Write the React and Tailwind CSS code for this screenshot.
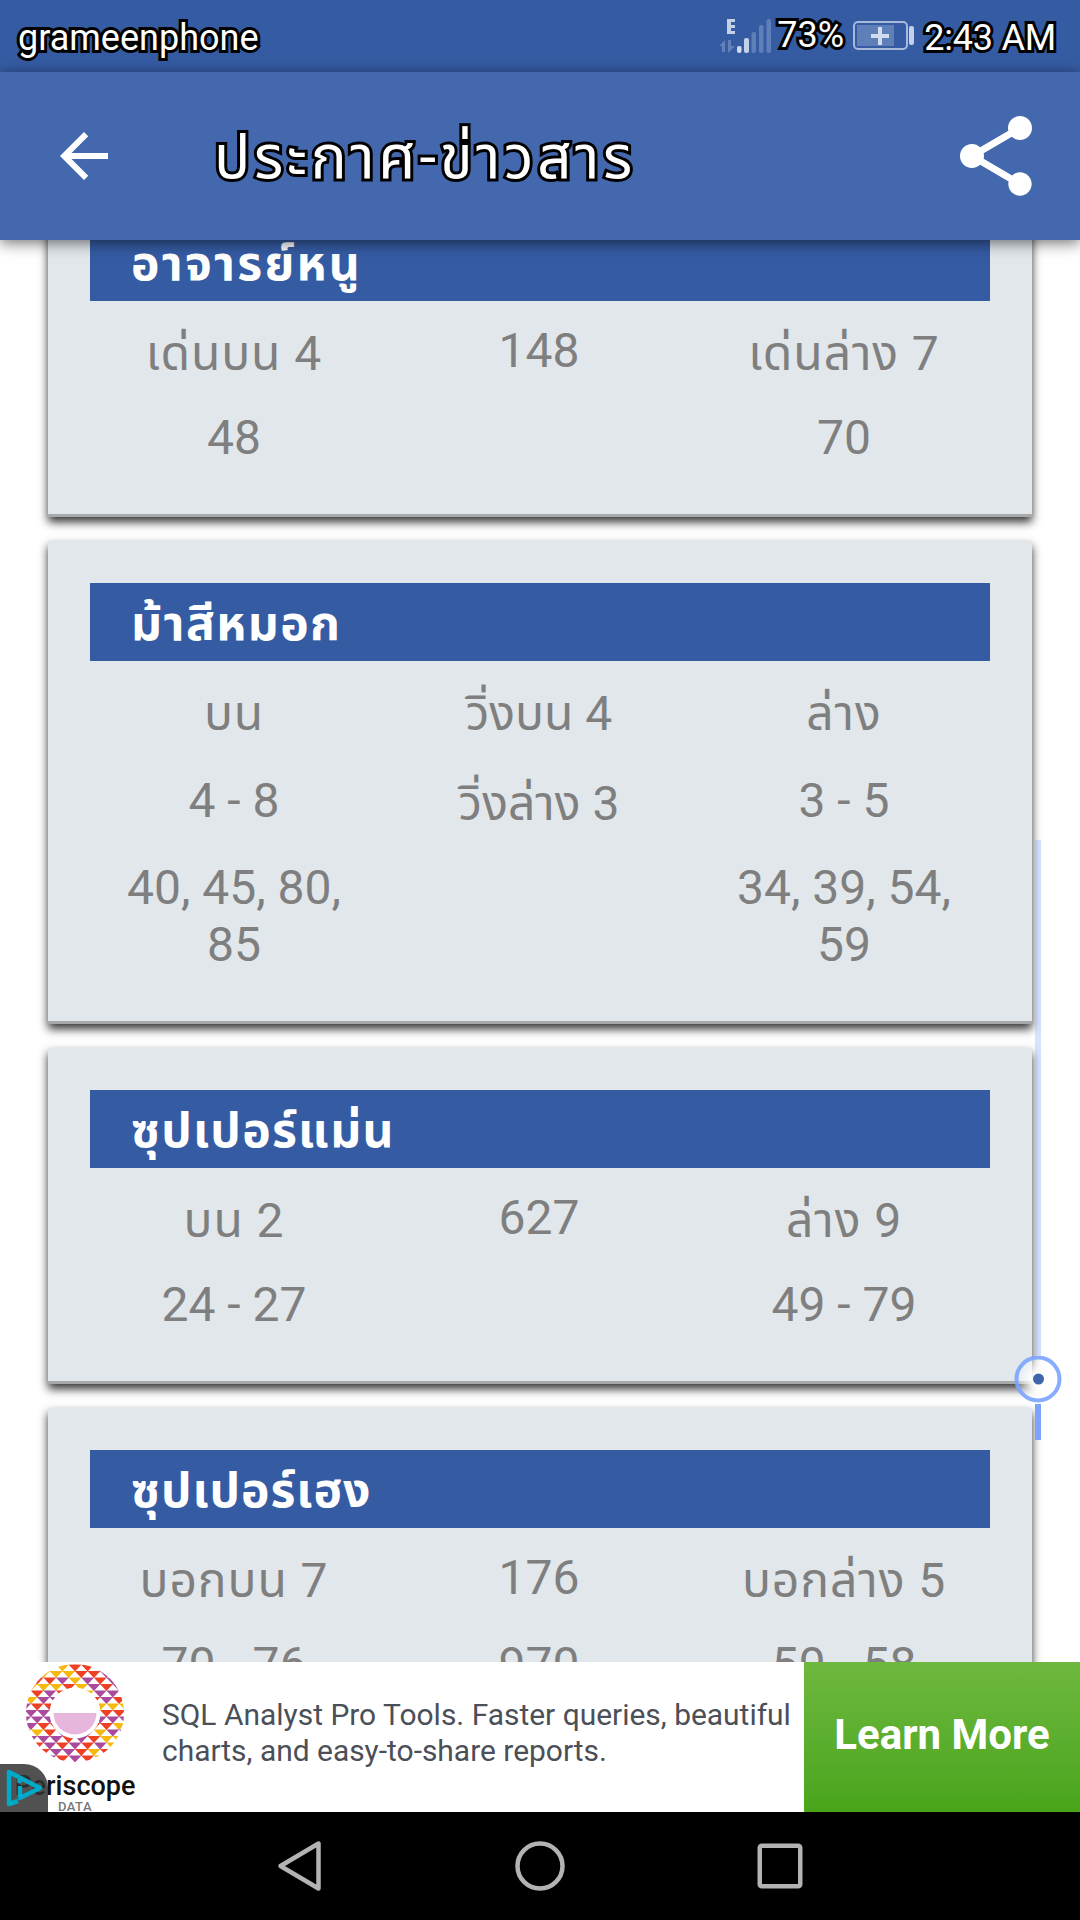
import React from 'react';

const cards = [
  {
    title: 'อาจารย์หนู',
    titleClass: 'tracking-[2.300px]',
    rows: [
      ['เด่นบน 4', '148', 'เด่นล่าง 7'],
      ['48', '', '70'],
    ],
  },
  {
    title: 'ม้าสีหมอก',
    titleClass: 'tracking-[1.500px]',
    rows: [
      ['บน', 'วิ่งบน 4', 'ล่าง'],
      ['4 - 8', 'วิ่งล่าง 3', '3 - 5'],
      ['40, 45, 80, 85', '', '34, 39, 54, 59'],
    ],
  },
  {
    title: 'ซุปเปอร์แม่น',
    titleClass: 'tracking-[1.300px]',
    rows: [
      ['บน 2', '627', 'ล่าง 9'],
      ['24 - 27', '', '49 - 79'],
    ],
  },
  {
    title: 'ซุปเปอร์เฮง',
    titleClass: 'tracking-[1px]',
    rows: [
      ['บอกบน 7', '176', 'บอกล่าง 5'],
      ['70 - 76', '970', '50 - 58'],
    ],
  },
];

const getCellClass = (text) => {
  // Thai text sits a little lower than plain digits
  if (!/[\u0E00-\u0E7F]/.test(text)) return 'py-[15px]';
  if (text.startsWith('วิ่ง')) return 'pt-[18px] pb-3';
  return 'pt-[18px] pb-3 tracking-[0.900px]';
};

const StatusBar = () => (
  <div className="h-[72px] shrink-0 bg-[#355ba3] flex items-center pl-[18px] pr-6 text-white text-[36px] leading-[42px]">
    <span className="pt-1 outlined">grameenphone</span>
    <svg className="ml-auto mr-1 shrink-0" width="54" height="36" viewBox="0 0 54 36">
      <path d="M8 1h8v3h-4v3h4v3h-4v3h4v3H8z" fill="#c3d0e8" />
      <path d="M0 28l6-6v12H3v-6zM9 22h3v6h4l-7 7z" fill="#6480b8" />
      <rect x="18" y="28" width="4.500" height="7" rx="2" fill="#d3dcee" />
      <rect x="25" y="20" width="5" height="15" rx="2" fill="#c3d0e8" />
      <rect x="32.500" y="14" width="4.500" height="21" rx="2" fill="#5f7fb9" />
      <rect x="40" y="7" width="4.500" height="28" rx="2" fill="#5f7fb9" />
      <rect x="47.500" y="1" width="4.500" height="34" rx="2" fill="#5f7fb9" />
    </svg>
    <span className="pb-0.5 outlined">73%</span>
    <svg className="ml-[9px] mr-[9px] shrink-0" width="62" height="32" viewBox="0 0 62 32">
      <rect x="1" y="2" width="53" height="27" rx="4" fill="none" stroke="#a9b9da" strokeWidth="2" />
      <rect x="4" y="5" width="37" height="21" fill="#5f7fb9" />
      <path d="M25 7h4v7h7v4h-7v7h-4v-7h-7v-4h7z" fill="#d3dcee" />
      <rect x="56" y="6" width="5" height="19" rx="2" fill="#c3d0e8" />
    </svg>
    <span className="pt-[3px] tracking-[-0.200px] outlined">2:43 AM</span>
  </div>
);

const AppBar = () => (
  <header className="relative z-10 h-[168px] shrink-0 bg-[#4468ae] flex items-center pl-12 pr-9 shadow-[0_3px_14px_rgba(0,0,0,0.55)]">
    <svg width="72" height="72" viewBox="0 0 24 24" fill="white">
      <path d="M20 11H7.830l5.590-5.590L12 4l-8 8 8 8 1.410-1.410L7.830 13H20v-2z" />
    </svg>
    <h1 className="ml-[94px] pt-[3px] text-[60px] leading-[72px] tracking-[3.600px] text-white outlined">
      ประกาศ-ข่าวสาร
    </h1>
    <svg className="ml-auto" width="96" height="96" viewBox="0 0 24 24" fill="white">
      <path d="M18 16.080c-.76 0-1.440.3-1.960.77L8.910 12.700c.05-.23.09-.46.09-.7s-.04-.47-.09-.7l7.050-4.110c.54.5 1.250.81 2.040.81 1.660 0 3-1.340 3-3s-1.340-3-3-3-3 1.340-3 3c0 .24.040.47.090.7L8.040 9.810C7.500 9.310 6.790 9 6 9c-1.660 0-3 1.340-3 3s1.340 3 3 3c.79 0 1.500-.31 2.040-.81l7.120 4.160c-.05.21-.08.43-.08.65 0 1.610 1.310 2.920 2.920 2.920s2.920-1.310 2.920-2.920-1.310-2.920-2.920-2.920z" />
    </svg>
  </header>
);

const Card = ({ title, titleClass, rows }) => (
  <section className="bg-[#e1e7eb] border-b-[3px] border-[#a8a9aa] px-[42px] pt-[42px] pb-[33px] shadow-[0_5px_9px_rgba(0,0,0,0.8)]">
    <h2 className={`h-[78px] bg-[#355ba3] pl-[41px] pt-3 text-[48px] leading-[57px] font-bold text-white ${titleClass}`}>
      {title}
    </h2>
    <div className="pt-[6px] text-[48px] leading-[57px] text-center text-[#7f7f7f]">
      {rows.map((row, i) => (
        <div key={i} className={`flex gap-[17px] ${row[1] === 'วิ่งบน 4' ? 'pb-[3px]' : ''}`}>
          {row.map((cell, j) => (
            <div key={j} className={`w-[288px] px-6 ${getCellClass(cell)}`}>
              {cell}
            </div>
          ))}
        </div>
      ))}
    </div>
  </section>
);

// Ring of small inverted triangles around the half disc, nine per row
const ringRows = [
  'YYYYRRRRR',
  'YYYYRRPPP',
  'RRRPYPRPP',
  'YYYRYPRPP',
  'YRPRRYPPR',
  'YPPRRRPRP',
  'PRRPPPYYY',
  'PPRRRPRRR',
  'PPPRRRPPP',
  'PRRPPRRYR',
  'YYRPPPYPP',
  'PPPRPRYYY',
  'RRPRPRPYY',
  'RRPPRYRPP',
  'RRPRPRYPP',
];
const ringColors = { R: '#ee4023', P: '#aa4a9c', Y: '#f5b90f' };

const PeriscopeLogo = () => {
  const triangles = [];
  ringRows.forEach((colors, r) => {
    for (let c = 0; c < colors.length; c++) {
      const x = 49 + (c - 4) * 12.6 + (r % 2 ? 6.3 : 0);
      const y = 0.5 + r * 6.5;
      triangles.push(
        <path key={`${r}-${c}`} d={`M${x - 6.5} ${y}h13l-6.500 7z`} fill={ringColors[colors[c]]} />
      );
    }
  });
  return (
    <div className="w-[150px] pt-0.5 flex flex-col items-center">
      <svg className="shrink-0" width="98" height="98" viewBox="0 0 98 98">
        <defs>
          <clipPath id="ring">
            <circle cx="49" cy="49" r="49" />
          </clipPath>
        </defs>
        <g clipPath="url(#ring)">{triangles}</g>
        <circle cx="49" cy="49" r="25.500" fill="#fff" />
        <path d="M27.500 49h43a21.500 21.500 0 0 1-43 0z" fill="#e6b6dd" />
      </svg>
      <div className="mt-[10px] text-[27px] leading-7 font-medium text-[#111]">Periscope</div>
      <div className="text-[13px] leading-[13px] font-medium tracking-[0.500px] text-[#777]">DATA</div>
    </div>
  );
};

const AdBanner = () => (
  <div className="relative h-[150px] shrink-0 bg-white flex">
    <PeriscopeLogo />
    <p className="pl-3 pt-[35px] w-[654px] text-[29.950px] leading-9 text-[#4b4f58] whitespace-nowrap">
      SQL Analyst Pro Tools. Faster queries, beautiful
      <br />
      charts, and easy-to-share reports.
    </p>
    <div className="w-[276px] pb-1 flex items-center justify-center bg-linear-to-b from-[#6eb83e] to-[#49a51a] text-white text-[42px] leading-[48px] font-bold">
      Learn More
    </div>
    {/* AdChoices corner */}
    <div className="absolute left-0 bottom-0 size-12 rounded-tr-[24px] bg-[#333]/85">
      <svg width="48" height="48" viewBox="0 0 48 48" fill="none" stroke="#00a9c7" strokeWidth="4.500" strokeLinejoin="round">
        <path d="M18 37l-9 3V8l31 16-20 10V22" />
        <circle cx="19.500" cy="17" r="2.500" fill="#00a9c7" stroke="none" />
      </svg>
    </div>
  </div>
);

const NavBar = () => (
  <nav className="h-[108px] shrink-0 bg-black flex items-center justify-center gap-[180px]">
    <svg width="60" height="60" viewBox="0 0 60 60" fill="none" stroke="#b3b3b3" strokeWidth="4.500" strokeLinejoin="round">
      <path d="M48.500 7.500v45L10.500 30z" />
    </svg>
    <svg width="60" height="60" viewBox="0 0 60 60" fill="none" stroke="#b3b3b3" strokeWidth="4.500">
      <circle cx="30" cy="30" r="22.500" />
    </svg>
    <svg width="60" height="60" viewBox="0 0 60 60" fill="none" stroke="#b3b3b3" strokeWidth="4.500">
      <rect x="9.750" y="9.750" width="40.500" height="40.500" rx="2" />
    </svg>
  </nav>
);

const ScrollHandle = () => (
  <div className="absolute left-[1014px] top-[600px] w-12 flex flex-col items-center">
    <div className="w-[6px] h-[516px] bg-[#7ba4ff]/30" />
    <svg width="48" height="48" viewBox="0 0 48 48">
      <defs>
        <radialGradient id="glow">
          <stop offset="0.300" stopColor="#fff" stopOpacity="0.900" />
          <stop offset="1" stopColor="#fff" stopOpacity="0.200" />
        </radialGradient>
      </defs>
      <circle cx="24" cy="23" r="21.500" fill="url(#glow)" stroke="#7ba4ff" strokeOpacity="0.900" strokeWidth="4" />
      <circle cx="24.500" cy="23" r="5.500" fill="#3f66ad" />
    </svg>
    <div className="w-[6px] h-9 bg-[#7ba4ff]" />
  </div>
);

const App = () => (
  <div className="w-[1080px] h-[1920px] overflow-hidden flex flex-col bg-white font-[Roboto,'Noto_Sans_Thai','Noto_Sans',sans-serif] [&_.outlined]:[-webkit-text-stroke:6px_black] [&_.outlined]:[paint-order:stroke_fill]">
    <StatusBar />
    <AppBar />
    <main className="relative flex-1 min-h-0 overflow-hidden px-12">
      <div className="-mt-[59px] flex flex-col gap-6">
        {cards.map((card) => (
          <Card key={card.title} {...card} />
        ))}
      </div>
      <ScrollHandle />
    </main>
    <AdBanner />
    <NavBar />
  </div>
);

export default App;
